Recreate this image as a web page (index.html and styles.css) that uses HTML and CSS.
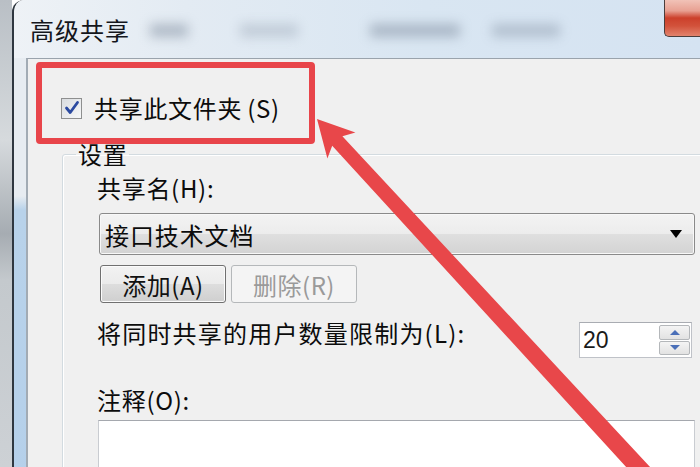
FILE: index.html
```html
<!DOCTYPE html>
<html lang="zh-CN">
<head>
  <meta charset="UTF-8">
  <meta name="viewport" content="width=device-width, initial-scale=1.0">
  <title>高级共享</title>
  <link rel="stylesheet" href="styles.css">
</head>
<body>
  <div class="screen">
    <div class="desktop"></div>

    <div class="window">
      <div class="titlebar">
        <span class="title">高级共享</span>
        <span class="blur b1"></span>
        <span class="blur b2"></span>
        <span class="blur b3"></span>
        <span class="blur b4"></span>
        <span class="close"></span>
      </div>

      <div class="frame">
        <div class="client">
          <label class="check-row">
            <span class="checkbox">
              <svg width="16" height="16" viewBox="0 0 16 16">
                <path d="M2.5 8 L6.2 12.5 L13.5 2.5" fill="none" stroke="#2b4aa0" stroke-width="2.8" stroke-linecap="round" stroke-linejoin="round"/>
              </svg>
            </span>
            <span>共享此文件夹</span><span class="key">(S)</span>
          </label>

          <fieldset class="group">
            <legend>设置</legend>
            <div class="label share-label">共享名(H):</div>
            <div class="combo">
              <span>接口技术文档</span>
              <span class="combo-arrow"></span>
            </div>
            <div class="buttons">
              <button class="btn" type="button">添加(A)</button>
              <button class="btn" type="button" disabled>删除(R)</button>
            </div>
            <div class="limit-row">
              <span class="label">将同时共享的用户数量限制为(L):</span>
              <div class="spinner">
                <span class="spin-value">20</span>
                <div class="spin-btns">
                  <span class="spin up"></span>
                  <span class="spin down"></span>
                </div>
              </div>
            </div>
            <div class="label comment-label">注释(O):</div>
            <div class="comment"></div>
          </fieldset>
        </div>
      </div>
    </div>

    <!-- annotation overlays -->
    <div class="mark-box"></div>
    <svg class="arrow" width="700" height="467" viewBox="0 0 700 467">
      <polygon points="317,119 355.4,132.6 342.4,136.3 676.2,495.1 663,507.3 332.2,145.7 327.4,158.4" fill="#e8474a"/>
    </svg>
  </div>
</body>
</html>
```

FILE: styles.css
```css
body {
  margin: 0;
  font-family: "Noto Sans CJK SC", "Noto Sans", sans-serif;
  color: #0c0c0c;
}
.screen {
  position: relative;
  width: 700px;
  height: 467px;
  overflow: hidden;
  display: flex;
}
.desktop {
  width: 12px;
  flex-shrink: 0;
  background: linear-gradient(to bottom, #b9bfc5 0, #d6dadd 30%, #a6acb2 50%, #c4c9cd 60%, #cdd1d5 100%);
}
.window {
  flex: 1;
  display: flex;
  flex-direction: column;
  border-left: 2px solid #2f3740;
  border-top-left-radius: 12px;
  overflow: hidden;
}
.titlebar {
  height: 58px;
  flex-shrink: 0;
  display: flex;
  align-items: flex-start;
  background: linear-gradient(to right, #eef2f6 0, #e3ebf3 25%, #d9e6f2 60%, #d5e3f2 100%);
}
.title {
  margin: 18px 0 0 16px;
  font-size: 24px;
  line-height: 24px;
  letter-spacing: 1px;
  color: #14161c;
}
.blur {
  margin-top: 24px;
  height: 13px;
  background: #7a889a;
  filter: blur(6px);
  opacity: 0.5;
}
.b1 { margin-left: 20px; width: 38px; }
.b2 { margin-left: 52px; width: 58px; opacity: 0.3; }
.b3 { margin-left: 72px; width: 90px; }
.b4 { margin-left: 32px; width: 68px; opacity: 0.4; }
.close {
  margin-left: auto;
  width: 36px;
  height: 37px;
  border-left: 1px solid #4a3d3c;
  border-bottom: 1px solid #4a3d3c;
  border-bottom-left-radius: 5px;
  box-sizing: border-box;
  background: linear-gradient(to bottom, #f1c2b7 0, #e8a092 30%, #cc402b 50%, #d2523b 72%, #e2836d 100%);
}
.frame {
  flex: 1;
  display: flex;
  padding-left: 12px;
  background: linear-gradient(to bottom, #e7ecf1 0, #e7ecf1 138px, #b8d2ea 152px, #b5d0ea 100%);
}
.client {
  flex: 1;
  background: #f0f0f0;
  border-left: 2px solid #a2abb4;
  border-top: 1px solid #9aa3ac;
  overflow: hidden;
}
.check-row {
  display: flex;
  align-items: center;
  margin-top: 37px;
  padding-left: 33px;
  height: 24px;
  font-size: 24px;
  line-height: 24px;
  letter-spacing: 0.7px;
}
.check-row .key {
  margin-left: 5px;
}
.checkbox {
  width: 21px;
  height: 21px;
  margin-right: 12px;
  box-sizing: border-box;
  border: 1px solid #8e8f8f;
  background: linear-gradient(135deg, #d9dcdf, #f7f8f9);
  display: flex;
  align-items: center;
  justify-content: center;
}
.group {
  margin: 22px 0 0 34px;
  padding: 0 30px 0 34px;
  width: 598px;
  border: 1px solid #d3dbe0;
  border-radius: 3px;
  box-shadow: inset 1px 1px 0 #fff;
}
.group legend {
  margin-left: -21px;
  padding: 0 2px;
  font-size: 24px;
  line-height: 24px;
  letter-spacing: 0.7px;
}
.label {
  font-size: 24px;
  line-height: 24px;
  letter-spacing: 0.7px;
}
.limit-row .label {
  letter-spacing: 1.2px;
}
.share-label {
  margin-top: 10px;
}
.combo {
  margin: 13px 0 0 2px;
  height: 42px;
  box-sizing: border-box;
  display: flex;
  align-items: center;
  justify-content: space-between;
  padding: 0 12px 0 5px;
  border: 1px solid #8a8a8a;
  border-radius: 3px;
  box-shadow: inset 0 0 0 1px #f8f8f8;
  background: linear-gradient(to bottom, #f3f3f3 0, #ececec 50%, #dfdfdf 51%, #d3d3d3 100%);
  font-size: 24px;
  letter-spacing: 0.9px;
}
.combo-arrow {
  width: 0;
  height: 0;
  border-left: 6px solid transparent;
  border-right: 6px solid transparent;
  border-top: 8px solid #000;
}
.buttons {
  display: flex;
  gap: 5px;
  margin: 10px 0 0 3px;
}
.btn {
  width: 126px;
  height: 38px;
  padding: 0;
  font-family: inherit;
  font-size: 24px;
  letter-spacing: 0.5px;
  color: #111;
  border: 1px solid #707070;
  border-radius: 3px;
  box-shadow: inset 0 0 0 1px #fbfbfb;
  background: linear-gradient(to bottom, #f2f2f2 0, #ebebeb 50%, #dddddd 51%, #cfcfcf 100%);
}
.btn:disabled {
  color: #9a9a9a;
  border-color: #b5b8ba;
  box-shadow: none;
  background: #f4f4f4;
}
.limit-row {
  display: flex;
  justify-content: space-between;
  align-items: flex-start;
  margin-top: 18px;
}
.spinner {
  margin: 1px 3px 0 0;
  width: 113px;
  height: 36px;
  box-sizing: border-box;
  display: flex;
  border: 1px solid #bfc2c8;
  border-top-color: #a9acb2;
  background: #fff;
}
.spin-value {
  flex: 1;
  padding-left: 3px;
  font-family: "Liberation Sans", Arial, sans-serif;
  font-size: 23px;
  line-height: 34px;
  color: #1a1a1a;
}
.spin-btns {
  width: 31px;
  display: flex;
  flex-direction: column;
  gap: 1px;
  padding: 2px 1px 2px 0;
}
.spin {
  flex: 1;
  display: flex;
  align-items: center;
  justify-content: center;
  border: 1px solid #b4b7ba;
  border-radius: 2px;
  background: linear-gradient(to bottom, #f4f4f4, #e2e2e2);
}
.spin::after {
  content: "";
  width: 0;
  height: 0;
  border-left: 5px solid transparent;
  border-right: 5px solid transparent;
}
.spin.up::after {
  border-bottom: 5px solid #4a6fb8;
}
.spin.down::after {
  border-top: 5px solid #4a6fb8;
}
.comment-label {
  margin-top: 30px;
}
.comment {
  margin: 8px 0 0 1px;
  height: 80px;
  background: #fff;
  border: 1px solid #c9ccd1;
  border-top-color: #a5a8ae;
}
.mark-box {
  position: absolute;
  left: 36px;
  top: 62px;
  width: 279px;
  height: 82px;
  box-sizing: border-box;
  border: 6px solid #e8454a;
  border-radius: 4px;
}
.arrow {
  position: absolute;
  left: 0;
  top: 0;
  pointer-events: none;
}
```
